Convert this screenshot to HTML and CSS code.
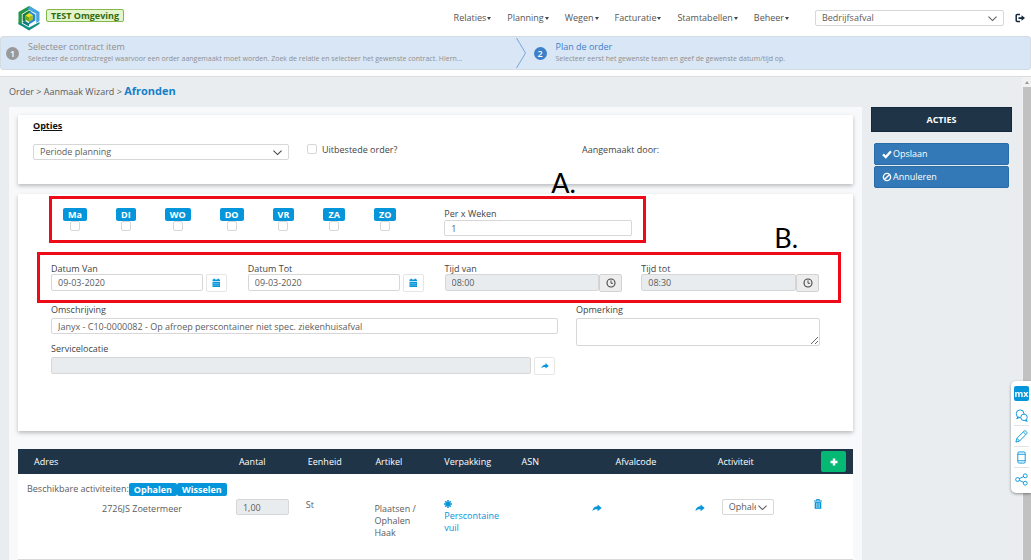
FILE: index.html
```html
<!DOCTYPE html>
<html lang="nl">
<head>
<meta charset="utf-8">
<title>Aanmaak Wizard - Afronden</title>
<link rel="stylesheet" href="styles.css">
</head>
<body>
<svg class="defs" aria-hidden="true">
  <symbol id="chevron" viewBox="0 0 10 10"><path d="M.500 2.800L5 7.300l4.500-4.500" fill="none" stroke="currentColor" stroke-width="1.200"/></symbol>
  <symbol id="calendar" viewBox="0 0 10 10"><path d="M1.500 1.500h1V.8H4v.7h2.500V.8H8v.7h1v1.600H1.500zM1.500 3.700H9V9H1.500z" fill="currentColor"/><path d="M2 5.500h6.500M2 7.200h6.500" stroke="#fff" stroke-width=".3"/></symbol>
  <symbol id="clock" viewBox="0 0 10 10"><circle cx="5" cy="5" r="4" fill="none" stroke="currentColor" stroke-width="1.100"/><path d="M5 2.400V5.300h2" fill="none" stroke="currentColor" stroke-width=".9"/></symbol>
  <symbol id="arrow" viewBox="0 0 10 10"><path d="M5.600 1.400L9.700 4.900 5.600 8.200V6.400C3.400 6.200 1.800 6.800.4 8.200.6 5.400 2.600 3.500 5.600 3.300z" fill="currentColor"/></symbol>
</svg>

<header class="topbar">
  <svg class="logo" viewBox="0 0 24 26" role="img" aria-label="Logo">
    <path d="M12 1L1.500 7v12L12 25.500 22.500 19V7z" fill="#fff"/>
    <path d="M12 1L1.500 7v12l3.300 1.900V9L15 3z" fill="#23964a"/>
    <path d="M13 1.200L22.500 7v9l-3.300 2V8.800L10.500 4z" fill="#47a6e0"/>
    <path d="M1.500 17.500V19L12 25.500 22.500 19v-2L12 22.500 4.800 18.600z" fill="#128f84"/>
    <path d="M5.600 9.500L12 5.600l2.600 1.500L8.600 10.800v6.800l-3-1.800z" fill="#17803e"/>
    <path d="M13 6.200l5.400 3.200v6.200L12 19.400v-3l3.600-2.200V10L11.500 7.600z" fill="#2a8ad0"/>
    <path d="M5.600 16.400v1.500l6.400 3.600v-3.200l-3-1.800z" fill="#0f7d79"/>
    <path d="M8.500 10.500L12 8.300l3.500 2.200v4.200L12 16.800l-3.500-2.100z" fill="#6fa51f"/>
    <path d="M8.500 10.500L12 8.300l3.500 2.200L12 12.600z" fill="#e6df25"/>
    <path d="M12 12.600l3.500-2.100v4.200L12 16.800z" fill="#a9bd20"/>
  </svg>
  <span class="env">TEST Omgeving</span>
  <nav class="menu">
    <button class="menu-item">Relaties</button>
    <button class="menu-item">Planning</button>
    <button class="menu-item">Wegen</button>
    <button class="menu-item">Facturatie</button>
    <button class="menu-item">Stamtabellen</button>
    <button class="menu-item">Beheer</button>
  </nav>
  <span class="select company">
    <select class="control" aria-label="Afdeling"><option>Bedrijfsafval</option></select>
    <svg class="select-icon"><use href="#chevron"/></svg>
  </span>
  <button class="logout" aria-label="Uitloggen">
    <svg viewBox="0 0 10 10"><path d="M5 1.500H2.200a1 1 0 0 0-1 1v5a1 1 0 0 0 1 1H5" fill="none" stroke="currentColor" stroke-width="1.500"/><path d="M3.500 4.200h3V2.200L10 5 6.500 7.800V5.900h-3z" fill="currentColor"/></svg>
  </button>
</header>

<ol class="wizard">
  <li class="step">
    <span class="step-number">1</span>
    <div class="step-text">
      <div class="step-title">Selecteer contract item</div>
      <div class="step-info">Selecteer de contractregel waarvoor een order aangemaakt moet worden. Zoek de relatie en selecteer het gewenste contract. Hiern...</div>
    </div>
  </li>
  <li class="step step-active">
    <svg class="step-divider" viewBox="0 0 10 30"><path d="M.500 0L9.500 15 .500 30" fill="none" stroke="#75a5dd"/></svg>
    <span class="step-number">2</span>
    <div class="step-text">
      <div class="step-title">Plan de order</div>
      <div class="step-info">Selecteer eerst het gewenste team en geef de gewenste datum/tijd op.</div>
    </div>
  </li>
</ol>

<div class="viewport">
  <div class="page">
    <div class="crumbs">Order &gt; Aanmaak Wizard &gt; <strong class="crumb-current">Afronden</strong></div>
    <div class="columns">
      <main class="content">
        <section class="card options">
          <h2 class="card-title">Opties</h2>
          <div class="options-row">
            <span class="select planning">
              <select class="control" aria-label="Planning"><option>Periode planning</option></select>
              <svg class="select-icon"><use href="#chevron"/></svg>
            </span>
            <label class="check-label"><input type="checkbox" class="check">Uitbestede order?</label>
            <span class="meta">Aangemaakt door:</span>
          </div>
        </section>

        <section class="card form">
          <div class="marked marked-days">
            <div class="days">
              <label class="day"><span class="tag">Ma</span><input type="checkbox" class="check"></label>
              <label class="day"><span class="tag">DI</span><input type="checkbox" class="check"></label>
              <label class="day"><span class="tag">WO</span><input type="checkbox" class="check"></label>
              <label class="day"><span class="tag">DO</span><input type="checkbox" class="check"></label>
              <label class="day"><span class="tag">VR</span><input type="checkbox" class="check"></label>
              <label class="day"><span class="tag">ZA</span><input type="checkbox" class="check"></label>
              <label class="day"><span class="tag">ZO</span><input type="checkbox" class="check"></label>
            </div>
            <div class="field weeks">
              <label class="label" for="weeks">Per x Weken</label>
              <input class="control" id="weeks" value="1">
            </div>
            <span class="note note-a">A.</span>
          </div>

          <div class="marked marked-dates">
            <div class="field">
              <label class="label" for="from">Datum Van</label>
              <div class="group"><input class="control" id="from" value="09-03-2020"><button class="pick" aria-label="Kies datum van"><svg class="icon"><use href="#calendar"/></svg></button></div>
            </div>
            <div class="field">
              <label class="label" for="to">Datum Tot</label>
              <div class="group"><input class="control" id="to" value="09-03-2020"><button class="pick" aria-label="Kies datum tot"><svg class="icon"><use href="#calendar"/></svg></button></div>
            </div>
            <div class="field">
              <label class="label" for="time-from">Tijd van</label>
              <div class="group group-joined"><input class="control" id="time-from" value="08:00" disabled><button class="pick pick-time" aria-label="Kies tijd van"><svg class="icon"><use href="#clock"/></svg></button></div>
            </div>
            <div class="field">
              <label class="label" for="time-to">Tijd tot</label>
              <div class="group group-joined"><input class="control" id="time-to" value="08:30" disabled><button class="pick pick-time" aria-label="Kies tijd tot"><svg class="icon"><use href="#clock"/></svg></button></div>
            </div>
            <span class="note note-b">B.</span>
          </div>

          <div class="details">
            <div class="details-main">
              <div class="field field-spaced">
                <label class="label" for="description">Omschrijving</label>
                <input class="control" id="description" value="Janyx - C10-0000082 - Op afroep perscontainer niet spec. ziekenhuisafval">
              </div>
              <div class="field field-spaced service">
                <label class="label" for="service">Servicelocatie</label>
                <div class="group"><input class="control" id="service" disabled><button class="pick" aria-label="Kies servicelocatie"><svg class="icon icon-small"><use href="#arrow"/></svg></button></div>
              </div>
            </div>
            <div class="field field-spaced">
              <label class="label" for="remark">Opmerking</label>
              <textarea class="control remark" id="remark"></textarea>
            </div>
          </div>
        </section>

        <table class="lines">
          <colgroup><col class="c-address"><col class="c-amount"><col class="c-unit"><col class="c-article"><col class="c-pack"><col class="c-asn"><col class="c-code"><col class="c-activity"><col class="c-tools"></colgroup>
          <thead>
            <tr>
              <th class="th-address">Adres</th><th>Aantal</th><th>Eenheid</th><th>Artikel</th><th>Verpakking</th><th>ASN</th><th>Afvalcode</th><th>Activiteit</th>
              <th class="th-tools"><button class="add" aria-label="Toevoegen"><svg class="icon" viewBox="0 0 10 10"><path d="M5 1.500v7M1.500 5h7" stroke="currentColor" stroke-width="2.400"/></svg></button></th>
            </tr>
          </thead>
          <tbody>
            <tr class="row-tags"><td colspan="9"><div class="tags">Beschikbare activiteiten:<span class="tag">Ophalen</span><span class="tag">Wisselen</span></div></td></tr>
            <tr class="row-line">
              <td class="td-address">2726JS Zoetermeer</td>
              <td class="td-amount"><input class="control" aria-label="Aantal" value="1,00" disabled></td>
              <td class="td-unit">St</td>
              <td class="td-article">Plaatsen / Ophalen Haak</td>
              <td class="td-pack"><svg class="icon icon-small" viewBox="0 0 10 10"><path d="M5 0v10M0 5h10M1.500 1.500l7 7M8.500 1.500l-7 7" stroke="currentColor" stroke-width="1.900"/></svg><a class="link" href="#">Perscontaine vuil</a></td>
              <td class="td-lookup"><button class="bare" aria-label="Kies ASN"><svg class="icon"><use href="#arrow"/></svg></button></td>
              <td class="td-lookup"><button class="bare" aria-label="Kies afvalcode"><svg class="icon"><use href="#arrow"/></svg></button></td>
              <td class="td-activity"><span class="select activity"><select class="control" aria-label="Activiteit"><option>Ophalen</option></select><svg class="select-icon"><use href="#chevron"/></svg></span></td>
              <td class="td-tools"><button class="bare" aria-label="Verwijderen"><svg class="icon" viewBox="0 0 10 10"><path d="M1 2h8M3.500 1.800V.6h3v1.200" fill="none" stroke="currentColor"/><path d="M1.700 3.100h6.600V9.800H1.700z" fill="currentColor"/><path d="M3.600 4v5M5 4v5M6.400 4v5" stroke="#fff" stroke-width=".5"/></svg></button></td>
            </tr>
          </tbody>
        </table>
      </main>

      <aside class="actions">
        <h2 class="actions-title">ACTIES</h2>
        <div class="actions-list">
          <button class="action"><svg class="icon" viewBox="0 0 10 10"><path d="M1 5.300l2.800 2.700L9 2.300" fill="none" stroke="currentColor" stroke-width="2.300"/></svg>Opslaan</button>
          <button class="action"><svg class="icon" viewBox="0 0 10 10"><circle cx="5" cy="5" r="3.600" fill="none" stroke="currentColor" stroke-width="1.400"/><path d="M7.600 2.400L2.400 7.600" stroke="currentColor" stroke-width="1.400"/></svg>Annuleren</button>
        </div>
      </aside>
    </div>
  </div>
  <div class="scrollbar"><span class="scroll-up"></span><span class="scroll-thumb"></span></div>
</div>

<div class="feedback">
  <button class="mx" aria-label="Mendix">mx</button>
  <button class="tool" aria-label="Chat"><svg viewBox="0 0 14 14"><path d="M3.200 8.500L1.800 10.400l3.400-1.200"/><circle cx="5.500" cy="5.200" r="4.200"/><circle cx="9.700" cy="9" r="3.500" fill="#fff"/><path d="M11.800 11.700l1.500 1.600-2.800-.8"/></svg></button>
  <button class="tool" aria-label="Bewerken"><svg viewBox="0 0 14 14"><path d="M1 13l1-4 8-8c1.200-.8 3.600 1.500 2.700 2.800L4.800 12zM9 2.200l2.800 2.700M2.200 9l2.600 2.800"/></svg></button>
  <button class="tool" aria-label="Mobiel"><svg viewBox="0 0 14 14"><rect x="3" y="1" width="8" height="12" rx="1.500"/><path d="M3 3.500h8M3 10.500h8"/></svg></button>
  <button class="tool" aria-label="Delen"><svg viewBox="0 0 14 14"><circle cx="2.800" cy="7" r="2.100"/><circle cx="11" cy="3" r="2.100"/><circle cx="11" cy="11" r="2.100"/><path d="M4.700 6.100l4.500-2.200M4.700 7.900l4.500 2.200"/></svg></button>
</div>
</body>
</html>
```

FILE: styles.css
```css
* { box-sizing: border-box; }

body {
  margin: 0;
  min-height: 100vh;
  display: flex;
  flex-direction: column;
  background: #fff;
  color: #5c5c5c;
  font: 9px/12px "Open Sans", "Noto Sans", sans-serif;
}

button, input, select, textarea { font: inherit; color: inherit; }
button { margin: 0; padding: 0; border: 0; background: none; }
h2, ol { margin: 0; padding: 0; }
.defs { display: none; }
.icon { display: block; width: 10px; height: 10px; flex: none; }
.icon-small { width: 8px; height: 8px; }

/* Top bar */
.topbar {
  display: flex;
  align-items: center;
  height: 36px;
  padding: 0 6px 0 17px;
}
.logo { width: 24px; height: 26px; }
.env {
  align-self: flex-start;
  margin: 9px 0 0 5px;
  padding: 0 4px;
  border: 1px solid #84b84c;
  border-radius: 2px;
  background: #e2f5cd;
  color: #336b10;
  font-weight: 700;
  line-height: 11px;
}
.menu { display: flex; gap: 16px; margin-left: auto; }
.menu-item { display: flex; align-items: center; color: #555; }
.menu-item::after {
  content: "";
  margin-left: 1px;
  border: 2px solid transparent;
  border-top: 3px solid #444;
  border-bottom: 0;
}
.company { width: 189px; margin-left: 26px; }
.logout { width: 10px; height: 10px; margin-left: 11px; color: #14283c; }
.logout svg { display: block; }

/* Form controls */
.control {
  display: block;
  width: 100%;
  min-width: 0;
  height: 16px;
  margin: 0;
  padding: 0 6px;
  border: 1px solid #d7d7d7;
  border-radius: 2px;
  background: #fff;
  color: #5c5c5c;
  line-height: 12px;
}
.control:disabled { background: #e9ecef; opacity: 1; }
.select { position: relative; display: block; }
.select .control { appearance: none; padding-left: 6px; }
.select-icon {
  position: absolute;
  top: 4px;
  right: 7px;
  width: 9px;
  height: 9px;
  pointer-events: none;
}
.check {
  appearance: none;
  display: block;
  width: 10px;
  height: 10px;
  margin: 0;
  border: 1px solid #d7d7d7;
  border-radius: 2px;
  background: #fff;
}
.label { display: block; color: #444; font-weight: 500; line-height: 11px; }
.tag {
  display: block;
  padding: 0 5px;
  border-radius: 2px;
  background: #0595db;
  color: #fff;
  font-weight: 700;
  line-height: 13px;
}

/* Wizard */
.wizard {
  display: grid;
  grid-template-columns: 1fr 1fr;
  height: 34px;
  border: 1px solid #d3dbe3;
  border-radius: 3px;
  background: #d9e6f5;
  list-style: none;
}
.step { position: relative; display: flex; align-items: center; min-width: 0; padding-left: 5px; color: #8f8f8f; }
.step-active { padding-left: 18px; }
.step-divider { position: absolute; left: 0; top: 1px; width: 10px; height: 30px; }
.step-number {
  flex: none;
  width: 13px;
  border-radius: 50%;
  background: #999;
  color: #fff;
  font-weight: 600;
  line-height: 13px;
  text-align: center;
}
.step-text { margin-left: 9px; white-space: nowrap; }
.step-info { font-size: 7px; }
.step-active .step-number { background: #3d7fcb; }
.step-active .step-title { color: #3d7fcb; }

/* Page frame */
.viewport {
  flex: 1;
  display: flex;
  margin-top: 6px;
  border-top: 1px solid #d9dddf;
  background: #e9edf0;
}
.page { flex: 1; min-width: 0; display: flex; flex-direction: column; padding: 0 10px 0 9px; }
.crumbs { padding: 7px 0; line-height: 16px; }
.crumb-current { color: #157fc9; font-size: 11px; line-height: 12px; }
.columns { flex: 1; display: flex; gap: 9px; }
.content { flex: 1; min-width: 0; padding: 8px 9px 0; background: #f8f9fb; }
.scrollbar { width: 9px; display: flex; flex-direction: column; align-items: center; background: #f1f1f1; }
.scroll-up { margin: 4px 0 3px; border: 2px solid transparent; border-top: 0; border-bottom: 3px solid #999; }
.scroll-thumb { flex: 1; width: 8px; background: #c1c1c1; }

.card { background: #fff; box-shadow: 0 2px 4px rgba(0, 0, 0, .25); }
.options { height: 69px; padding: 4px 15px; }
.card-title { color: #111; font-size: 9px; line-height: 14px; text-decoration: underline; }
.options-row {
  display: grid;
  grid-template-columns: 274fr 275fr 256fr;
  margin-top: 11px;
  color: #444;
  font-weight: 500;
}
.planning { margin-right: 18px; font-weight: 400; }
.check-label { display: flex; gap: 5px; align-self: start; }

/* Planning form */
.form { margin-top: 10px; padding: 2px 12px 56px 19px; }
.marked { position: relative; border: 3px solid #ee0a16; }
.marked-days {
  display: flex;
  gap: 48px;
  height: 47px;
  margin: 0 195px 0 12px;
  padding: 9px 11px 0;
}
.days { flex: 334; display: flex; justify-content: space-between; }
.day { display: flex; flex-direction: column; align-items: center; }
.weeks { flex: 188; }
.weeks .label { line-height: 12px; }
.marked-dates {
  display: grid;
  grid-template-columns: repeat(4, 1fr);
  gap: 21px;
  height: 51px;
  margin-top: 9px;
  padding: 8px 21px 0 11px;
}
.note { position: absolute; color: #000; font: 27px/30px Lato, sans-serif; }
.note-a { right: 67px; top: -31px; }
.note-b { right: 40px; top: -32px; }
.group { display: flex; gap: 3px; }
.group .control { flex: 1; height: 17px; }
.pick {
  display: flex;
  align-items: center;
  justify-content: center;
  width: 21px;
  height: 18px;
  border: 1px solid #e6e6e6;
  border-radius: 2px;
  background: #fff;
  color: #0595db;
}
.group-joined { gap: 0; margin-right: -2px; }
.pick-time { width: 23px; border-color: #d2d2d2; background: #ededed; color: #444; }
.details { display: grid; grid-template-columns: 507fr 244fr; gap: 18px; padding: 1px 21px 0 14px; }
.field-spaced .label { margin-bottom: 3px; }
.service { margin: 9px 3px 0 0; }
.remark { height: 28px; resize: vertical; }

/* Order lines */
.lines {
  width: 100%;
  margin-top: 18px;
  border-collapse: collapse;
  table-layout: fixed;
  background: #fff;
  border-bottom: 1px solid #d9d9d9;
}
.c-address { width: 25.500%; }
.c-amount { width: 8.250%; }
.c-unit { width: 8.100%; }
.c-article { width: 8.250%; }
.c-pack { width: 9.250%; }
.c-asn { width: 11.250%; }
.c-code { width: 12.250%; }
.c-activity { width: 12.250%; }
.lines th {
  height: 25px;
  padding: 0 8px;
  background: #203447;
  color: #fff;
  font-weight: 400;
  text-align: left;
}
.lines .th-address { padding-left: 16px; }
.lines .th-tools { padding: 0 7px 0 0; }
.add {
  display: flex;
  align-items: center;
  justify-content: center;
  width: 25px;
  height: 21px;
  margin-left: auto;
  border-radius: 2px;
  background: #05b975;
}
.lines td { padding: 0 8px; vertical-align: top; }
.lines .row-tags td { height: 23px; padding: 9px 9px 0; }
.tags { display: flex; }
.row-line { height: 62px; }
.lines .td-address { padding: 6px 0 0 84px; }
.lines .td-amount { padding: 2px 11px 0 5px; }
.lines .td-unit { padding: 2px 0 0 6px; }
.lines .td-article { padding: 6px 8px 0 7px; line-height: 12px; }
.lines .td-pack { padding-top: 2px; }
.td-pack { color: #0595db; }
.td-pack .icon { margin: 1px 0 2px; }
.link { display: block; color: #0595db; text-decoration: none; }
.bare { color: #0595db; }
.lines .td-lookup { padding: 6px 5px 0 0; text-align: right; }
.lines .td-activity { padding: 2px 0 0 12px; }
.activity { width: 52px; }
.activity .control { padding-right: 17px; }
.lines .td-tools { padding: 2px 0 0 1px; text-align: left; }

/* Actions */
.actions { width: 141px; }
.actions-title {
  background: #203447;
  border: 1px solid #14283c;
  color: #fff;
  font-size: 9px;
  line-height: 23px;
  text-align: center;
}
.actions-list { display: grid; gap: 1px; padding: 11px 3px; }
.action {
  display: flex;
  align-items: center;
  gap: 1px;
  height: 22px;
  padding-left: 7px;
  border: 1px solid #2a6ca8;
  border-radius: 2px;
  background: #3379b7;
  color: #fff;
}

/* Feedback strip */
.feedback {
  position: fixed;
  right: 0;
  top: 381px;
  width: 20px;
  padding: 5px 2px 4px 3px;
  border-radius: 5px 0 0 5px;
  background: #fff;
  box-shadow: 0 1px 3px rgba(0, 0, 0, .4);
}
.mx {
  display: block;
  width: 15px;
  height: 15px;
  margin-bottom: 4px;
  border-radius: 2px;
  background: #0595db;
  color: #fff;
  font-weight: 700;
  line-height: 13px;
}
.tool { display: block; width: 15px; height: 21px; padding: 4px 1px 3px; border-bottom: 1px solid #e3e3e3; }
.tool:last-child { border-bottom: 0; }
.tool svg { display: block; width: 13px; height: 13px; fill: none; stroke: #0595db; }
```
